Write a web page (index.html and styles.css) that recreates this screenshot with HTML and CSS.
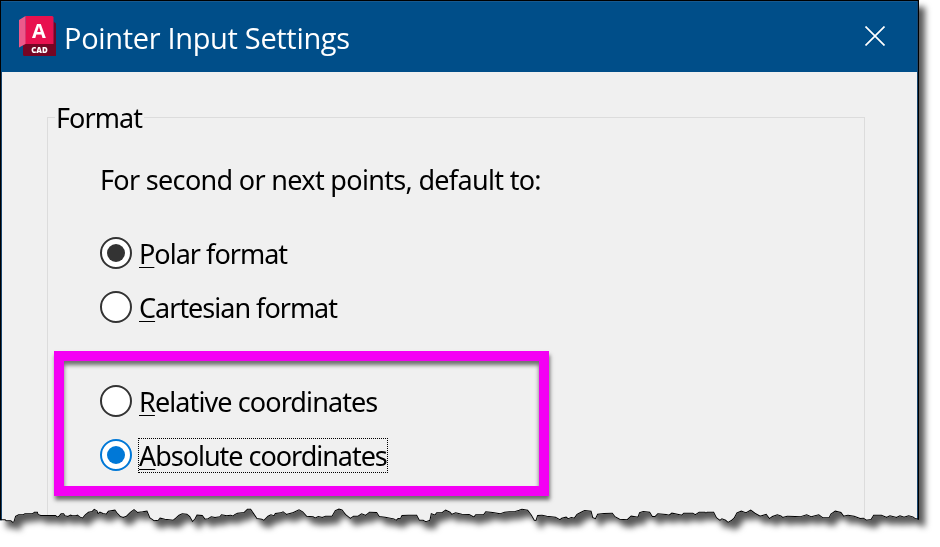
FILE: index.html
```html
<!DOCTYPE html>
<html lang="en">
<head>
<meta charset="utf-8">
<title>Pointer Input Settings</title>
<link rel="stylesheet" href="styles.css">
</head>
<body>
<svg class="defs" width="0" height="0" aria-hidden="true">
  <defs>
    <path id="edge" d="M0 91H15L18 94H32L38 99 43 97 48 80 56 76H70L75 73H98L104 68H111L113 75 122 78H166L172 83 178 80 184 73H190L194 79 204 81 212 77 218 79H228L232 77 238 82 248 86 257 76 266 68 277 66 283 60 290 64 293 74 300 68 308 72 320 74 326 65 344 62 350 70 360 81 370 84 380 80 392 68 402 61 412 69 428 67 440 65 448 84 462 94 476 92 481 86 494 89 520 92 530 84 538 77 547 73 560 74 568 81 577 97 586 88 592 77 606 78 614 89 624 88 634 82 645 84 660 82 665 76 680 79 692 77 700 80 705 75 713 71 733 69 743 59 751 59 761 74 770 87 785 89 792 93 805 80 813 76 823 79 827 72 843 70 849 67 859 75 881 69 897 61 907 67 919 80 939 82 945 86 955 81 967 84 977 80 997 80 1007 63 1017 59 1025 61 1035 74 1051 87 1061 80 1075 80 1085 73 1097 78 1109 68 1129 69 1137 81 1155 83 1181 88 1189 93 1195 87 1203 86 1207 78 1225 77 1249 77 1257 92 1269 92 1277 97 1291 92 1295 73 1305 77 1311 70 1327 69 1337 62 1349 68 1355 75 1367 70 1385 74 1407 75 1422 83 1428 76 1452 75 1458 67 1478 69 1500 73 1514 68 1528 67 1542 67 1558 62 1566 59 1582 62 1592 75 1602 92 1609 93 1614 78 1626 77 1640 80 1666 83 1680 91 1686 86 1698 83 1704 88 1714 84 1724 86 1732 74 1744 68 1754 63 1772 65 1777 84 1787 88 1794 74 1812 72 1836 71 1844 81 1858 89 1882 91 1894 80 1915 83 1920 69 1930 66 1948 68 1956 81 1966 81 1974 73 1998 75 2008 77 2016 71 2032 74 2046 77 2052 71 2078 71 2086 76 2098 68 2114 68 2118 72 2122 68 2140 68 2148 84 2160 93 2166 88 2176 92 2184 99 2196 92 2204 85 2212 70 2224 65 2238 70 2252 62 2264 71 2280 80 2298 75 2308 88 2318 81 2332 76 2342 79 2348 84 2362 80 2386 81 2400 82 2420 76 2434 82 2456 76 2468 85 2488 85 2494 73 2506 65 2522 69 2530 80 2544 77 2562 80 2580 87 2590 86 2598 92 2614 90 2622 77 2644 77 2660 84 2670 79 2690 84 2700 79 2712 83 2726 79 2738 82 2745 87 2757 89V-1470H0Z" transform="translate(0 490) scale(.33333)"/>
    <clipPath id="torn" clipPathUnits="userSpaceOnUse"><use href="#edge"/></clipPath>
  </defs>
</svg>
<div class="shadow">
  <main class="dialog">
    <header class="titlebar">
      <svg class="logo" width="38" height="41" viewBox="0 0 38 41" aria-hidden="true">
        <path d="M4 28h33v12H5.500Q4 40 4 38.500z" fill="#750524"/>
        <path d="M34.500 5.500l2.500 2v22h-3z" fill="#750524"/>
        <path d="M6.500 0h26.500Q34.500 0 34.500 1.500V28H6z" fill="#e8114f"/>
        <path d="M0 4L6.500 0v28L0 31.500z" fill="#ec5a8b"/>
        <text x="20" y="22" class="logo-a">A</text>
        <text x="20.500" y="36.700" class="logo-cad">CAD</text>
      </svg>
      <h1 class="title">Pointer Input Settings</h1>
      <svg class="close" width="20" height="20" viewBox="0 0 20 20" aria-label="Close"><path d="M.5.5l19 19M19.500.5l-19 19"/></svg>
    </header>
    <fieldset class="group">
      <legend><span class="t-format">Format</span></legend>
      <p class="prompt">For second or next points, default to:</p>
      <div class="options">
        <label class="option"><span class="radio on"></span><span class="label t-polar"><u>P</u>olar format</span></label>
        <label class="option"><span class="radio"></span><span class="label t-cart"><u>C</u>artesian format</span></label>
      </div>
      <div class="highlight">
        <label class="option"><span class="radio"></span><span class="label t-rel"><u>R</u>elative coordinates</span></label>
        <label class="option"><span class="radio on blue"></span><span class="label focus t-abs"><u>A</u>bsolute coordinates</span></label>
      </div>
    </fieldset>
    <svg class="outline" width="940" height="547" aria-hidden="true"><use href="#edge"/></svg>
  </main>
</div>
</body>
</html>
```

FILE: styles.css
```css
* { box-sizing: border-box; }
body { margin: 0; width: 940px; height: 547px; overflow: hidden; background: #fff; font-family: "Noto Sans", sans-serif; color: #000; }
.defs { position: absolute; }
.shadow { width: 940px; height: 547px; filter: drop-shadow(6px 7px 3px rgba(0, 0, 0, .65)); }
.dialog { position: relative; width: 919px; height: 547px; padding: 1px 1px 0; background: #f0f0f0; border-right: 1px solid #000; clip-path: url(#torn); box-shadow: inset 2px 0 #17456f, inset -1px 0 #17456f; }
.titlebar { display: flex; align-items: center; height: 71px; padding: 0 32px 0 18px; background: #004e89; border-top: 1px solid #17598f; }
.logo { margin-top: -1px; overflow: visible; }
.logo-a { font: 700 20px "Open Sans", sans-serif; fill: #fff; text-anchor: middle; }
.logo-cad { font: 800 7.800px "Open Sans", sans-serif; fill: #fff; text-anchor: middle; }
.title { margin: 1px 0 0 7px; font: 400 29px/40px "Open Sans", sans-serif; letter-spacing: -.32px; color: #fff; white-space: nowrap; }
.close { margin: -2px 0 0 auto; stroke: #fff; stroke-width: 1.700; fill: none; }
.group { display: flex; flex-direction: column; width: 818px; height: 450px; margin: 27px 0 0 46px; padding: 0; border: 1px solid #dcdcdc; font-size: 27px; line-height: 36px; min-width: 0; }
.group legend { margin-left: 7px; padding: 0 2px 0 1px; line-height: 36px; }
.t-format { position: relative; top: 1px; letter-spacing: -.95px; }
.prompt { margin: 27px 0 0 52px; letter-spacing: -.68px; white-space: nowrap; }
.options { margin: 35px 0 0 52px; }
.option { display: flex; align-items: center; gap: 6px; height: 54px; white-space: nowrap; }
.options .option:first-child { margin-top: -7px; }
.radio { display: grid; place-items: center; width: 32px; height: 32px; border: 2px solid #333; border-radius: 50%; background: #fff; color: #333; }
.radio.on::after { content: ""; width: 18px; height: 18px; border-radius: 50%; background: currentColor; }
.radio.blue { border-color: #0078d7; color: #0078d7; }
.label { height: 35px; padding: 0 1px; line-height: 35px; }
.label u { text-underline-offset: 3px; text-decoration-thickness: 1px; }
.t-polar { letter-spacing: -.98px; }
.t-cart { letter-spacing: -1px; }
.t-rel { letter-spacing: -.9px; }
.t-abs { letter-spacing: -1.030px; }
.focus { outline: 1px dotted #000; outline-offset: -1px; }
.highlight { width: 495px; height: 145px; margin: 17px 0 0 6px; padding: 13px 0 0 36px; border: 10px solid #f400f4; box-shadow: 1px 4px 4px rgba(0, 0, 0, .55), inset 0 4px 4px rgba(0, 0, 0, .55); }
.outline { position: absolute; left: 0; top: 0; fill: none; stroke: #000; stroke-width: 6; }
```
